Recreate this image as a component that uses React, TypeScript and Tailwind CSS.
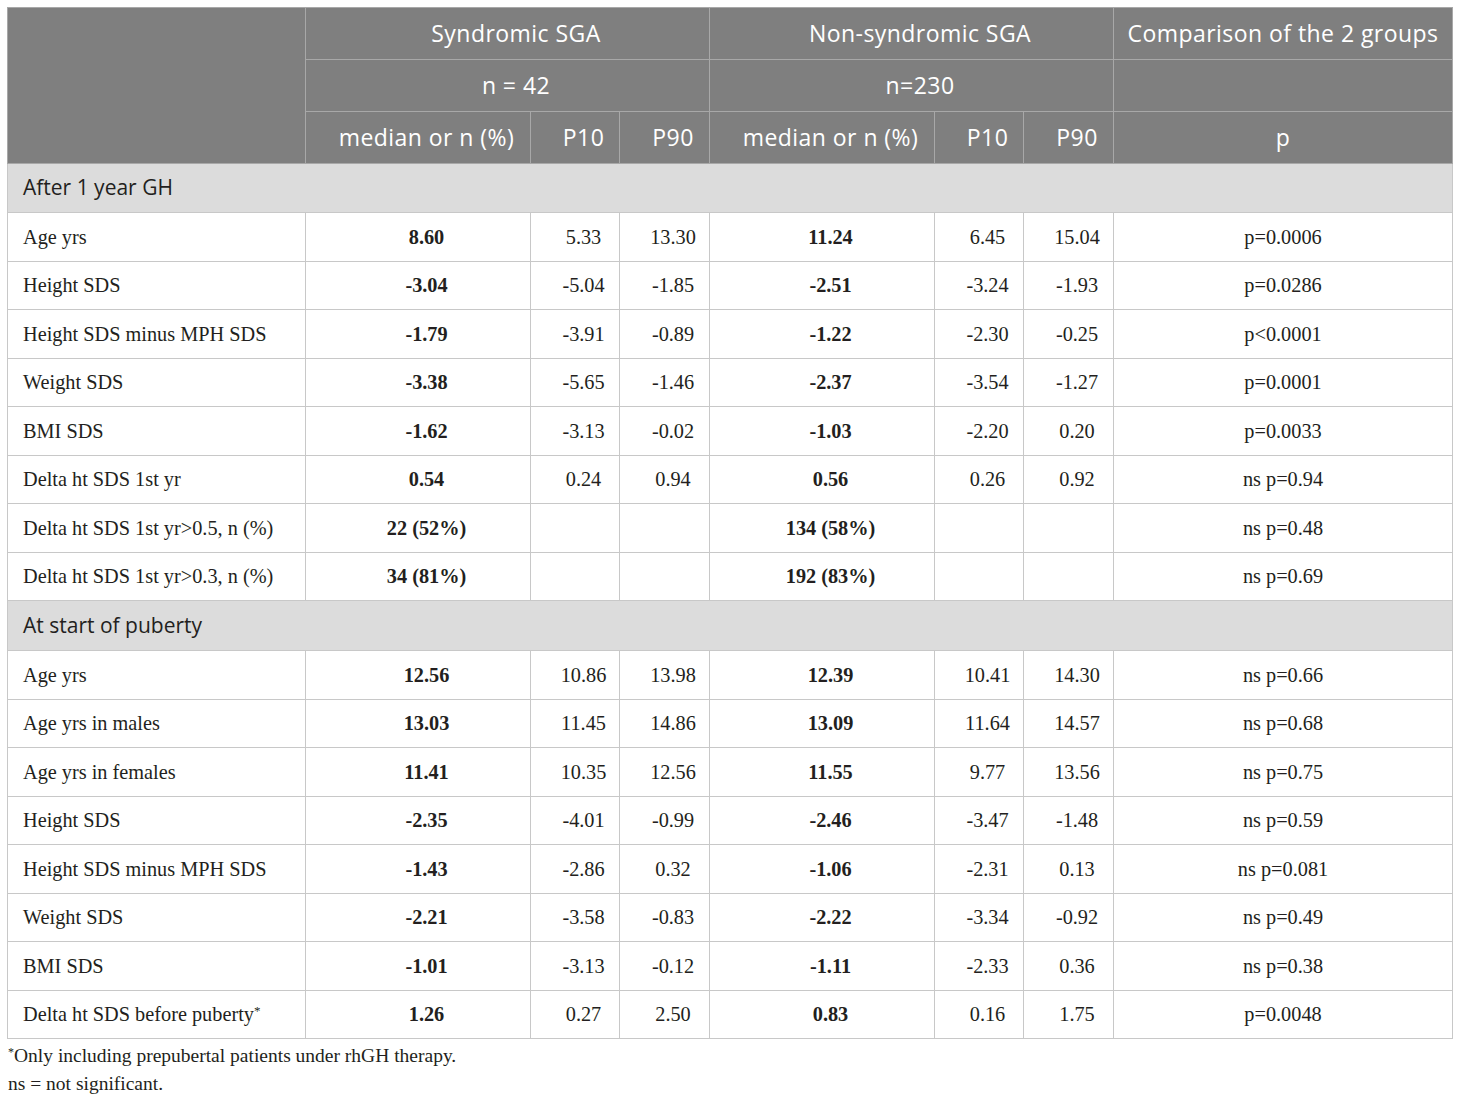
import React from "react";

type Row = { label: string; a: string; a10: string; a90: string; b: string; b10: string; b90: string; p: string };

const sec1: Row[] = [
  { label: "Age yrs", a: "8.60", a10: "5.33", a90: "13.30", b: "11.24", b10: "6.45", b90: "15.04", p: "p=0.0006" },
  { label: "Height SDS", a: "-3.04", a10: "-5.04", a90: "-1.85", b: "-2.51", b10: "-3.24", b90: "-1.93", p: "p=0.0286" },
  { label: "Height SDS minus MPH SDS", a: "-1.79", a10: "-3.91", a90: "-0.89", b: "-1.22", b10: "-2.30", b90: "-0.25", p: "p<0.0001" },
  { label: "Weight SDS", a: "-3.38", a10: "-5.65", a90: "-1.46", b: "-2.37", b10: "-3.54", b90: "-1.27", p: "p=0.0001" },
  { label: "BMI SDS", a: "-1.62", a10: "-3.13", a90: "-0.02", b: "-1.03", b10: "-2.20", b90: "0.20", p: "p=0.0033" },
  { label: "Delta ht SDS 1st yr", a: "0.54", a10: "0.24", a90: "0.94", b: "0.56", b10: "0.26", b90: "0.92", p: "ns p=0.94" },
  { label: "Delta ht SDS 1st yr>0.5, n (%)", a: "22 (52%)", a10: "", a90: "", b: "134 (58%)", b10: "", b90: "", p: "ns p=0.48" },
  { label: "Delta ht SDS 1st yr>0.3, n (%)", a: "34 (81%)", a10: "", a90: "", b: "192 (83%)", b10: "", b90: "", p: "ns p=0.69" },
];

const sec2: Row[] = [
  { label: "Age yrs", a: "12.56", a10: "10.86", a90: "13.98", b: "12.39", b10: "10.41", b90: "14.30", p: "ns p=0.66" },
  { label: "Age yrs in males", a: "13.03", a10: "11.45", a90: "14.86", b: "13.09", b10: "11.64", b90: "14.57", p: "ns p=0.68" },
  { label: "Age yrs in females", a: "11.41", a10: "10.35", a90: "12.56", b: "11.55", b10: "9.77", b90: "13.56", p: "ns p=0.75" },
  { label: "Height SDS", a: "-2.35", a10: "-4.01", a90: "-0.99", b: "-2.46", b10: "-3.47", b90: "-1.48", p: "ns p=0.59" },
  { label: "Height SDS minus MPH SDS", a: "-1.43", a10: "-2.86", a90: "0.32", b: "-1.06", b10: "-2.31", b90: "0.13", p: "ns p=0.081" },
  { label: "Weight SDS", a: "-2.21", a10: "-3.58", a90: "-0.83", b: "-2.22", b10: "-3.34", b90: "-0.92", p: "ns p=0.49" },
  { label: "BMI SDS", a: "-1.01", a10: "-3.13", a90: "-0.12", b: "-1.11", b10: "-2.33", b90: "0.36", p: "ns p=0.38" },
  { label: "Delta ht SDS before puberty*", a: "1.26", a10: "0.27", a90: "2.50", b: "0.83", b10: "0.16", b90: "1.75", p: "p=0.0048" },
];

const td = "border border-[#c8c8c8] text-center align-middle py-0 pr-0 pl-[17px]";
const tdp = "border border-[#c8c8c8] text-center align-middle p-0";

function DataRow({ r }: { r: Row }) {
  const label =
    r.label.endsWith("*") ? (
      <>
        {r.label.slice(0, -1)}
        <span className="text-[13px] relative top-[-6px]">*</span>
      </>
    ) : (
      r.label
    );
  return (
    <tr className="h-[48.5px]">
      <td className="border border-[#c8c8c8] text-left align-middle pl-[15px] whitespace-nowrap">{label}</td>
      <td className={`${td} font-bold`}>{r.a}</td>
      <td className={td}>{r.a10}</td>
      <td className={td}>{r.a90}</td>
      <td className={`${td} font-bold`}>{r.b}</td>
      <td className={td}>{r.b10}</td>
      <td className={td}>{r.b90}</td>
      <td className={tdp}>{r.p}</td>
    </tr>
  );
}

function Section({ title, h }: { title: string; h: string }) {
  return (
    <tr className={h}>
      <td
        colSpan={8}
        className="border border-[#c8c8c8] bg-[#dcdcdc] pl-[15px] text-left align-middle text-[21px] text-[#231f20] font-['Open_Sans',sans-serif]"
      >
        {title}
      </td>
    </tr>
  );
}

const th = "border border-[#a8a8a8] bg-[#7f7f7f] text-white font-normal text-center align-middle py-0 pr-0 pl-[17px] whitespace-nowrap";
const thp = "border border-[#a8a8a8] bg-[#7f7f7f] text-white font-normal text-center align-middle p-0 whitespace-nowrap";

export default function App() {
  return (
    <div className="bg-white w-[1460px] min-h-[1098px] pt-[7px] pl-[7px]">
      <table className="table-fixed border-collapse w-[1445px] font-['Liberation_Serif',serif] text-[20.3px] text-[#231f20]">
        <colgroup>
          <col className="w-[298px]" />
          <col className="w-[225px]" />
          <col className="w-[89px]" />
          <col className="w-[90px]" />
          <col className="w-[225px]" />
          <col className="w-[89px]" />
          <col className="w-[90px]" />
          <col className="w-[339px]" />
        </colgroup>
        <thead className="font-['Open_Sans',sans-serif] text-[23px] tracking-[0.45px]">
          <tr className="h-[52px]">
            <th rowSpan={3} className={thp}></th>
            <th colSpan={3} className={th}>Syndromic SGA</th>
            <th colSpan={3} className={th}>Non-syndromic SGA</th>
            <th className={thp}>Comparison of the 2 groups</th>
          </tr>
          <tr className="h-[52px]">
            <th colSpan={3} className={th}>n = 42</th>
            <th colSpan={3} className={th}>n=230</th>
            <th className={thp}></th>
          </tr>
          <tr className="h-[52px]">
            <th className={th}>median or n (%)</th>
            <th className={th}>P10</th>
            <th className={th}>P90</th>
            <th className={th}>median or n (%)</th>
            <th className={th}>P10</th>
            <th className={th}>P90</th>
            <th className={thp}>p</th>
          </tr>
        </thead>
        <tbody>
          <Section title="After 1 year GH" h="h-[49px]" />
          {sec1.map((r, i) => (
            <DataRow key={"a" + i} r={r} />
          ))}
          <Section title="At start of puberty" h="h-[50px]" />
          {sec2.map((r, i) => (
            <DataRow key={"b" + i} r={r} />
          ))}
        </tbody>
      </table>
      <div className="font-['Liberation_Serif',serif] text-[19.5px] text-[#231f20] leading-[25px] pt-[4px] pl-[1px]">
        <div>
          <span className="text-[12px] relative top-[-6px]">*</span>Only including prepubertal patients under rhGH therapy.
        </div>
        <div>ns = not significant.</div>
      </div>
    </div>
  );
}
